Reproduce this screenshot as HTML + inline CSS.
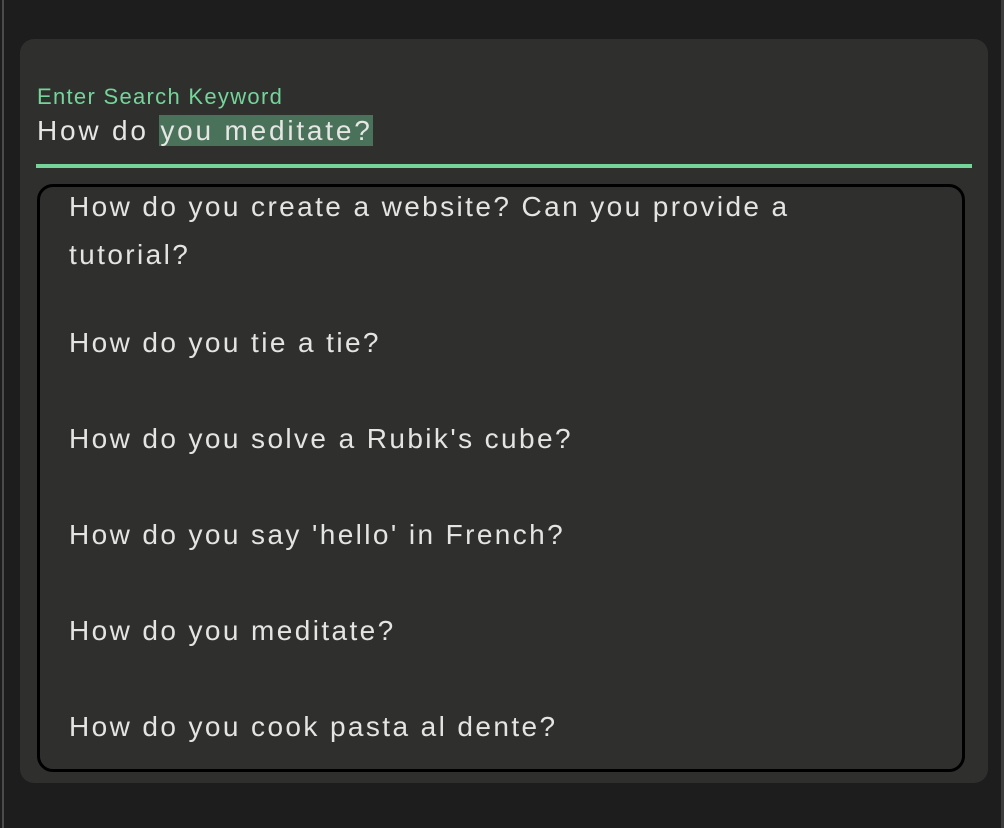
<!DOCTYPE html>
<html><head><style>
html,body{margin:0;padding:0;width:1004px;height:828px;background:#1c1d1c;overflow:hidden;font-family:"Liberation Sans",sans-serif;}
.ll{position:absolute;left:2px;top:0;width:2px;height:828px;background:#4a4b4a;}
.rl{position:absolute;left:1001px;top:0;width:3px;height:828px;background:#3c3d3c;}
.card{position:absolute;left:20px;top:39px;width:968px;height:744px;background:#2f302e;border-radius:14px;}
.lab{position:absolute;left:37px;top:84px;font-size:22px;color:#74d49a;letter-spacing:1.3px;}
.inp{position:absolute;left:37px;top:112px;font-size:28px;color:#e6e6e4;line-height:38px;letter-spacing:2.8px;white-space:nowrap;}
.inp span{background:#4a725a;padding-left:1px;}
.gl{position:absolute;left:36px;top:164px;width:936px;height:4px;background:#74d49a;}
.box{position:absolute;left:37px;top:184px;width:922px;height:582px;border:3px solid #000;border-radius:16px;background:#2f302e;overflow:hidden;}
.it{position:absolute;left:29px;font-size:28px;color:#e4e4e2;line-height:48px;letter-spacing:2.4px;width:780px;}
</style></head><body>
<div class="ll"></div><div class="rl"></div>
<div class="card"></div>
<div class="lab">Enter Search Keyword</div>
<div class="inp">How do <span>you meditate?</span></div>
<div class="gl"></div>
<div class="box">
<div class="it" style="top:-4px">How do you create a website? Can you provide a tutorial?</div>
<div class="it" style="top:132px">How do you tie a tie?</div>
<div class="it" style="top:228px">How do you solve a Rubik's cube?</div>
<div class="it" style="top:324px">How do you say 'hello' in French?</div>
<div class="it" style="top:420px">How do you meditate?</div>
<div class="it" style="top:516px">How do you cook pasta al dente?</div>
</div>
</body></html>
